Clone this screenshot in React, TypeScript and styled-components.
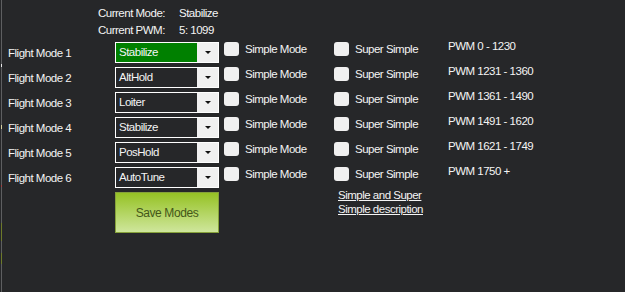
import React from 'react';
import styled, { createGlobalStyle } from 'styled-components';

const GlobalStyle = createGlobalStyle`
  html, body {
    margin: 0;
    padding: 0;
    background: #262729;
    overflow: hidden;
  }
  body {
    font-family: "Liberation Sans", Arial, sans-serif;
    font-size: 11.5px;
    color: #f4f4f4;
  }
`;

const Page = styled.div`
  display: flex;
  width: 625px;
  height: 292px;
  background: #262729;
`;

// thin edge of the neighbouring window on the far left
const Edge = styled.div`
  display: flex;
  flex-direction: column;
  width: 1px;
  margin-left: 1px;
  background: #5e5f61;
`;

const EdgeBit = styled.div<{ $top: number; $h: number; $color: string }>`
  margin-top: ${p => p.$top}px;
  height: ${p => p.$h}px;
  background: ${p => p.$color};
`;

const Panel = styled.div`
  flex: 1;
  padding-left: 6px;
  letter-spacing: -0.5px;
`;

const Header = styled.div`
  display: grid;
  grid-template-columns: 81px auto;
  margin-left: 90px;
  padding-top: 5px;
  line-height: 17px;
  margin-bottom: 3px;
`;

const ModeGrid = styled.div`
  display: grid;
  grid-template-columns: 107px 109px 110px 114px 1fr;
  grid-auto-rows: 21px;
  row-gap: 4px;
`;

const Label = styled.div`
  align-self: center;
  line-height: 14px;
`;

const Combo = styled.div<{ $active?: boolean }>`
  display: flex;
  width: 104px;
  height: 21px;
  box-sizing: border-box;
  border: 1px solid #ffffff;
  background: ${p => (p.$active ? '#008000' : '#262729')};
`;

const ComboValue = styled.div`
  flex: 1;
  padding-left: 3px;
  line-height: 19px;
`;

const ComboButton = styled.div`
  width: 21px;
  background: #f0f0f0;
  display: flex;
  align-items: center;
  justify-content: center;
`;

const Arrow = styled.div`
  width: 0;
  height: 0;
  border-left: 3px solid transparent;
  border-right: 3px solid transparent;
  border-top: 3px solid #111;
  margin-left: 1px;
`;

const Option = styled.label`
  display: flex;
  align-items: flex-start;
`;

const Box = styled.span`
  width: 15px;
  height: 14px;
  border-radius: 3px;
  background: #f0f0f0;
  flex-shrink: 0;
`;

const OptionText = styled.span`
  margin-left: 6px;
  line-height: 14px;
`;

const Pwm = styled.div`
  margin-top: -2px;
  line-height: 13px;
`;

const SaveButton = styled.button`
  grid-column: 2;
  width: 104px;
  height: 41px;
  border: 1px solid #86a23a;
  background: linear-gradient(#95c224, #cfe69c);
  color: #44561a;
  font-family: "Liberation Sans", Arial, sans-serif;
  font-size: 12px;
  letter-spacing: -0.4px;
  padding: 0;
`;

const HelpLink = styled.a`
  grid-column: 4;
  margin-top: -3px;
  margin-left: 4px;
  line-height: 13.5px;
  color: #f4f4f4;
  text-decoration: underline;
  align-self: start;
  width: 90px;
`;

const modes = [
  { mode: 'Stabilize', pwm: 'PWM 0 - 1230' },
  { mode: 'AltHold', pwm: 'PWM 1231 - 1360' },
  { mode: 'Loiter', pwm: 'PWM 1361 - 1490' },
  { mode: 'Stabilize', pwm: 'PWM 1491 - 1620' },
  { mode: 'PosHold', pwm: 'PWM 1621 - 1749' },
  { mode: 'AutoTune', pwm: 'PWM 1750 +' },
];

const App: React.FC = () => {
  return (
    <Page>
      <GlobalStyle />
      <Edge>
        <EdgeBit $top={64} $h={3} $color="#e8e8e8" />
        <EdgeBit $top={58} $h={4} $color="#d8d0a0" />
        <EdgeBit $top={56} $h={2} $color="#a04040" />
        <EdgeBit $top={36} $h={18} $color="#6d7a2a" />
        <EdgeBit $top={12} $h={11} $color="#6d7a2a" />
      </Edge>
      <Panel>
        <Header>
          <span>Current Mode:</span>
          <span>Stabilize</span>
          <span>Current PWM:</span>
          <span>5: 1099</span>
        </Header>
        <ModeGrid>
          {modes.map((m, i) => (
            <React.Fragment key={i}>
              <Label>Flight Mode {i + 1}</Label>
              <Combo $active={i === 0}>
                <ComboValue>{m.mode}</ComboValue>
                <ComboButton>
                  <Arrow />
                </ComboButton>
              </Combo>
              <Option>
                <Box />
                <OptionText>Simple Mode</OptionText>
              </Option>
              <Option>
                <Box />
                <OptionText>Super Simple</OptionText>
              </Option>
              <Pwm>{m.pwm}</Pwm>
            </React.Fragment>
          ))}
          <SaveButton>Save Modes</SaveButton>
          <HelpLink>Simple and Super Simple description</HelpLink>
        </ModeGrid>
      </Panel>
    </Page>
  );
};

export default App;
